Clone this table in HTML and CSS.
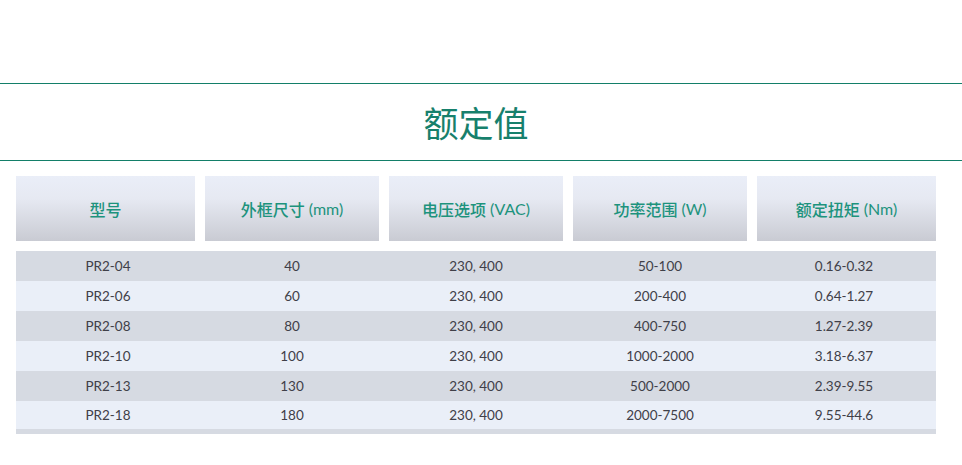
FILE: index.html
```html
<!DOCTYPE html>
<html lang="zh">
<head>
<meta charset="utf-8">
<title>额定值</title>
<link rel="stylesheet" href="styles.css">
</head>
<body>
<div class="top-space"></div>
<div class="title-band">
  <h1 class="title">额定值</h1>
</div>
<div class="wrap">
  <div class="table">
    <div class="head">
      <div class="th"><span>型号</span></div>
      <div class="th"><span>外框尺寸 <em>(mm)</em></span></div>
      <div class="th"><span>电压选项 <em>(VAC)</em></span></div>
      <div class="th"><span>功率范围 <em>(W)</em></span></div>
      <div class="th"><span>额定扭矩 <em>(Nm)</em></span></div>
    </div>
    <div class="body">
      <div class="row"><div>PR2-04</div><div>40</div><div>230, 400</div><div>50-100</div><div>0.16-0.32</div></div>
      <div class="row"><div>PR2-06</div><div>60</div><div>230, 400</div><div>200-400</div><div>0.64-1.27</div></div>
      <div class="row"><div>PR2-08</div><div>80</div><div>230, 400</div><div>400-750</div><div>1.27-2.39</div></div>
      <div class="row"><div>PR2-10</div><div>100</div><div>230, 400</div><div>1000-2000</div><div>3.18-6.37</div></div>
      <div class="row"><div>PR2-13</div><div>130</div><div>230, 400</div><div>500-2000</div><div>2.39-9.55</div></div>
      <div class="row last"><div>PR2-18</div><div>180</div><div>230, 400</div><div>2000-7500</div><div>9.55-44.6</div></div>
    </div>
  </div>
</div>
</body>
</html>
```
FILE: styles.css
```css
html, body {
  margin: 0;
  padding: 0;
  background: #ffffff;
}
body {
  font-family: "Lato", "Noto Sans CJK SC", sans-serif;
  width: 962px;
  overflow: hidden;
}
.top-space {
  height: 83px;
}
.title-band {
  border-top: 1px solid #137f69;
  border-bottom: 1px solid #137f69;
  height: 76px;
  width: 962px;
  box-sizing: content-box;
}
.title {
  width: 952px;
  margin: 0;
  padding-top: 18px;
  text-align: center;
  font-family: "Noto Sans CJK SC", sans-serif;
  font-weight: 400;
  font-size: 35px;
  line-height: 40px;
  color: #17806c;
}
.wrap {
  width: 952px;
  padding: 15px 16px 0;
  box-sizing: border-box;
}
.head {
  display: grid;
  grid-template-columns: repeat(5, 1fr);
}
.th {
  padding: 0 5px;
}
.th:first-child { padding-left: 0; }
.th:last-child { padding-right: 0; }
.th span {
  display: flex;
  align-items: center;
  justify-content: center;
  gap: 4px;
  height: 65px;
  background: linear-gradient(to bottom, #eaeef8 0%, #e6e9f2 35%, #c9cbd3 100%);
  font-family: "Lato", "Noto Sans CJK SC", sans-serif;
  font-size: 16px;
  font-weight: 500;
  color: #1d937d;
}
.th em {
  font-style: normal;
  font-weight: 400;
}
.body {
  margin-top: 10px;
  border-bottom: 5px solid #d6dae2;
}
.row {
  display: grid;
  grid-template-columns: repeat(5, 1fr);
  height: 30px;
  align-items: center;
  text-align: center;
  font-size: 13.5px;
  font-weight: 400;
  color: #404048;
}
.row:nth-child(odd) { background: #d6dae2; }
.row:nth-child(even) { background: #eaeff8; }
.row.last { height: 28px; }
```
